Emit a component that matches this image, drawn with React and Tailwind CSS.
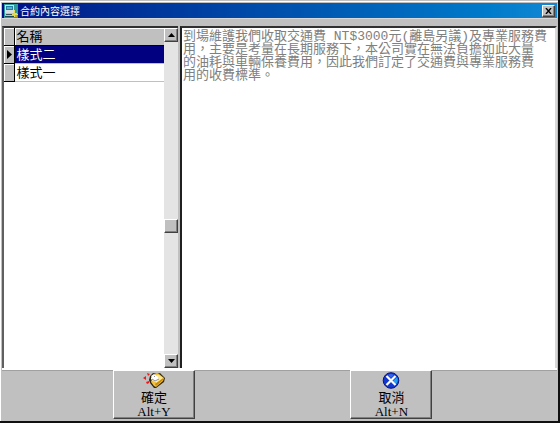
import React, { useState } from 'react';

const contracts = [
  {
    id: 2,
    name: '樣式二',
    content:
      '到場維護我們收取交通費 NT$3000元(離島另議)及專業服務費\n用，主要是考量在長期服務下，本公司實在無法負擔如此大量\n的油耗與車輛保養費用，因此我們訂定了交通費與專業服務費\n用的收費標準。',
  },
  { id: 1, name: '樣式一', content: '' },
];

const raised =
  'border border-t-white border-l-white border-r-[#404040] border-b-[#404040] bg-[#c0c0c0] shadow-[inset_-1px_-1px_0_#808080]';

const WindowIcon = () => (
  <svg width="14" height="14" viewBox="0 0 13 13" className="shrink-0" shapeRendering="crispEdges">
    <rect width="13" height="13" fill="#2f9a9c" />
    <path d="M1 1h8v7H1z" fill="#d5dde0" />
    <path d="M2 2h6v4H2z" fill="#247da8" />
    <path d="M3 3h4v2H3z" fill="#55b5cc" />
    <path d="M1 8h9v3H1z" fill="#b8c4c8" />
    <path d="M2 9h5v1H2z" fill="#38505c" />
    <path d="M1 11h9v1H1z" fill="#174a58" />
    <path d="M9 6h1v2h2v1h1v1h-2v2H9v-2H7V9h2z" fill="#e3dc58" />
    <path d="M10 10h2v2h-2z" fill="#c9a92c" />
  </svg>
);

const ConfirmIcon = () => (
  <svg width="24" height="17" viewBox="0 0 24 17">
    <path d="M1 6l3-2v4zM5 1l3 1-2 2zM4 10l3-1v2l-2 1z" fill="#f01818" />
    <path d="M8 4l3-3 4 1 3-1 5 5-1 4-8 6h-2l-4-5-1-3z" fill="#30260c" />
    <path d="M13 2l4 0 5 4-1 3-7 6-2-1-3-4 1-3z" fill="#f4c33c" />
    <path d="M13 12l8-6v2l-7 6z" fill="#c88a10" />
    <path d="M15 3l2 0 4 3-7 5z" fill="#ffe88a" />
    <path d="M9 4l3-2 3 2 2 3-3 3-3-1-2-2z" fill="#ffffff" />
    <path d="M10 7l3 2 4-2M12 4l1 1M9 5h1" stroke="#8d8d96" strokeWidth="1" fill="none" />
  </svg>
);

const CancelIcon = () => (
  <svg width="18" height="17" viewBox="0 0 18 17">
    <circle cx="9" cy="8.5" r="7.8" fill="#1238cf" stroke="#07127c" />
    <path d="M12 8l3-3q2 4-1 7l-3-3z" fill="#20a0f4" />
    <path d="M6 3q3-2 6 0l-3 3z" fill="#3565e8" />
    <path d="M4.500 4l9 9M13.500 4l-9 9" stroke="#fff" strokeWidth="2.200" />
  </svg>
);

const ActionButton = ({ icon, label, shortcut }) => (
  <button
    type="button"
    className={`flex h-[49px] w-[82px] flex-col items-center ${raised} text-[13px] text-black`}
  >
    <span className="flex h-[18px] items-center">{icon}</span>
    <span className="leading-[16px]">{label}</span>
    <span className="font-['Liberation_Serif',serif] leading-[13px]">{shortcut}</span>
  </button>
);

const App = () => {
  const [selected, setSelected] = useState(2);
  const current = contracts.find((c) => c.id === selected);

  return (
    <div className="flex h-screen flex-col border-r-2 border-b-2 border-[#101010] bg-[#c0c0c0] pt-px font-['Noto_Sans_CJK_TC',sans-serif] text-[13px]">
      <div className="flex min-h-0 flex-1 flex-col border-t border-l border-white px-px pt-px">
        {/* Title bar */}
        <div className="flex h-[15px] shrink-0 items-center bg-linear-to-r from-[#000c86] to-[#1088d4] px-[2px] text-white">
          <WindowIcon />
          <h1 className="ml-[2px] flex-1 text-[10px] leading-[14px]">合約內容選擇</h1>
          <button
            type="button"
            aria-label="關閉"
            className={`flex h-[12px] w-[13px] items-center justify-center ${raised}`}
          >
            <svg width="7" height="6" viewBox="0 0 8 7">
              <path d="M1 0l6 7M7 0L1 7" stroke="#000" strokeWidth="1.600" />
            </svg>
          </button>
        </div>
        <div className="h-[8px] shrink-0 border-t border-[#d8d8d8]" />

        <div className="flex min-h-0 flex-1 gap-[2px]">
          {/* Contract list */}
          <div className="flex w-44 shrink-0 border-t-2 border-l-2 border-t-[#303030] border-l-[#606060] bg-white">
            <div className="flex-1">
              <table className="w-full border-collapse text-left leading-[16px] text-black">
                <thead>
                  <tr className="h-[17px] border-b border-black bg-[#c0c0c0]">
                    <td className="w-[10px] border-r border-black p-0 shadow-[inset_1px_1px_0_#fff]" />
                    <th className="p-0 pl-[2px] font-normal shadow-[inset_1px_1px_0_#fff]">名稱</th>
                  </tr>
                </thead>
                <tbody>
                  {contracts.map((c) => (
                    <tr
                      key={c.id}
                      onClick={() => setSelected(c.id)}
                      className={
                        c.id === selected
                          ? 'h-[18px] border-b border-[#c0c0c0] bg-[#000080] text-white'
                          : 'h-[18px] border-b border-[#c0c0c0]'
                      }
                    >
                      <td className="border-r border-b border-black bg-[#c0c0c0] p-0 shadow-[inset_1px_1px_0_#fff]">
                        {c.id === selected && (
                          <svg width="6" height="9" viewBox="0 0 6 9" className="mx-auto">
                            <path d="M1 0l5 4.500L1 9z" fill="#000" />
                          </svg>
                        )}
                      </td>
                      <td className="p-0 pl-[2px]">{c.name}</td>
                    </tr>
                  ))}
                </tbody>
              </table>
            </div>
            <div className="flex w-[14px] flex-col bg-[#e4e4e4]">
              <button type="button" aria-label="向上" className={`flex h-[14px] items-center justify-center ${raised}`}>
                <svg width="7" height="4" viewBox="0 0 7 4"><path d="M3.500 0L7 4H0z" /></svg>
              </button>
              <div className="flex-[177]" />
              <div className={`h-[14px] ${raised}`} />
              <div className="flex-[121]" />
              <button type="button" aria-label="向下" className={`flex h-[14px] items-center justify-center ${raised}`}>
                <svg width="7" height="4" viewBox="0 0 7 4"><path d="M0 0h7L3.500 4z" /></svg>
              </button>
            </div>
          </div>

          {/* Contract text */}
          <textarea
            aria-label="合約內容"
            readOnly
            value={current.content}
            className="min-w-0 flex-1 resize-none overflow-hidden border-t-2 border-r-2 border-l-2 border-t-[#303030] border-r-[#d8d8d8] border-l-[#202020] bg-white px-px py-[2px] font-['Liberation_Mono','Noto_Sans_CJK_TC',monospace] text-[13px] leading-[13px] text-[#808080] outline-none"
          />
        </div>

        <div className="flex shrink-0 gap-[35%] border-t-2 border-white pb-[2px] pl-[20%] shadow-[inset_0_1px_0_#a0a0a0]">
          <ActionButton icon={<ConfirmIcon />} label="確定" shortcut="Alt+Y" />
          <ActionButton icon={<CancelIcon />} label="取消" shortcut="Alt+N" />
        </div>
      </div>
    </div>
  );
};

export default App;
